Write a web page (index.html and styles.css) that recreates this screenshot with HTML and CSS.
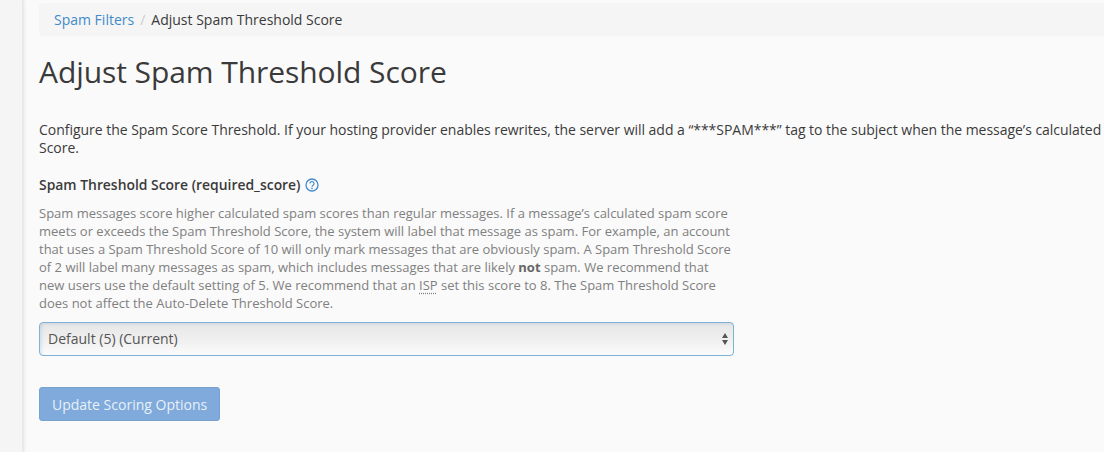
FILE: index.html
```html
<!DOCTYPE html>
<html lang="en">
<head>
  <meta charset="UTF-8" />
  <title>Adjust Spam Threshold Score</title>
  <link rel="stylesheet" href="styles.css">
</head>
<body>
  <div class="layout">
    <div class="sidebar"></div>
    <div class="content">
      <div class="breadcrumb">
        <a href="#">Spam Filters</a>
        <span class="divider">/</span>
        <span>Adjust Spam Threshold Score</span>
      </div>
      <h1>Adjust Spam Threshold Score</h1>
      <p class="intro">Configure the Spam Score Threshold. If your hosting provider enables rewrites, the server will add a “***SPAM***” tag to the subject when the message’s calculated Score.</p>
      <div class="field">
        <label class="field-label">
          Spam Threshold Score (required_score)
          <svg class="help" viewBox="0 0 14 14" width="14" height="14">
            <circle cx="7" cy="7" r="6" fill="none" stroke="#428bca" stroke-width="1.3"/>
            <path d="M5 5.5a2 2 0 1 1 3.1 1.7c-.7.45-1.1.8-1.1 1.6" fill="none" stroke="#428bca" stroke-width="1.2"/>
            <circle cx="7" cy="10.4" r=".8" fill="#428bca"/>
          </svg>
        </label>
        <p class="help-text">Spam messages score higher calculated spam scores than regular messages. If a message’s calculated spam score meets or exceeds the Spam Threshold Score, the system will label that message as spam. For example, an account that uses a Spam Threshold Score of 10 will only mark messages that are obviously spam. A Spam Threshold Score of 2 will label many messages as spam, which includes messages that are likely <b>not</b> spam. We recommend that new users use the default setting of 5. We recommend that an <abbr title="Internet Service Provider">ISP</abbr> set this score to 8. The Spam Threshold Score does not affect the Auto-Delete Threshold Score.</p>
        <div class="select">
          <span>Default (5) (Current)</span>
          <svg class="arrows" viewBox="0 0 8 14" width="8" height="14">
            <path d="M4 1l3 5H1z" fill="#555"/>
            <path d="M4 13L1 8h6z" fill="#555"/>
          </svg>
        </div>
      </div>
      <button class="btn">Update Scoring Options</button>
    </div>
  </div>
</body>
</html>
```

FILE: styles.css
```css
* { box-sizing: border-box; }

html, body {
  height: 100%;
  overflow: hidden;
}

body {
  margin: 0;
  font-family: "Open Sans", sans-serif;
  font-size: 14px;
  line-height: 18px;
  color: #3a3a3a;
  background: #fafafa;
}

.layout {
  display: flex;
  height: 452px;
}

.sidebar {
  flex: 0 0 23px;
  background: #f5f5f5;
  border-right: 1px solid #e8e8e8;
  box-shadow: 1px 0 3px rgba(0, 0, 0, 0.1);
}

.content {
  flex: 1;
  min-width: 0;
  padding-left: 16px;
}

.breadcrumb {
  display: flex;
  align-items: center;
  height: 33px;
  margin-top: 3px;
  padding: 0 15px;
  background: #f5f5f5;
  border-radius: 4px 0 0 4px;
}

.breadcrumb a {
  color: #428bca;
  text-decoration: none;
}

.divider {
  margin: 0 6px;
  color: #ccc;
}

h1 {
  margin: 17px 0 0;
  font-size: 30px;
  font-weight: 400;
  line-height: 37px;
  letter-spacing: -0.07px;
}

.intro {
  width: 1066px;
  margin: 31px 0 0;
  letter-spacing: -0.03px;
}

.field {
  width: 695px;
  margin-top: 19px;
}

.field-label {
  display: flex;
  align-items: center;
  gap: 4px;
  font-size: 13.9px;
  font-weight: 600;
}

.help-text {
  margin: 10px 0 0;
  font-size: 13px;
  line-height: 18px;
  color: #808080;
}

.help-text b {
  color: #666;
}

abbr {
  text-decoration: underline dotted;
  text-underline-offset: 3px;
}

.select {
  display: flex;
  align-items: center;
  justify-content: space-between;
  height: 34px;
  margin-top: 10px;
  padding: 0 4px 0 8px;
  color: #555;
  background: linear-gradient(#e6e6e6, #f1f1f1 60%, #fcfcfc);
  border: 1px solid #7fb0d6;
  border-radius: 4px;
  box-shadow: inset 2px 1px 3px rgba(102, 150, 190, 0.18);
}

.btn {
  display: block;
  height: 34px;
  margin-top: 31px;
  padding: 0 12px;
  font-family: inherit;
  font-size: 14px;
  color: #e8f0f8;
  background: #7faadb;
  border: 1px solid #76a3d0;
  border-radius: 3px;
}
```
